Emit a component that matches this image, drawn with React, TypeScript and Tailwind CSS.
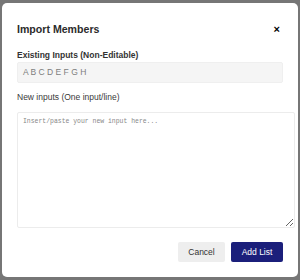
import React from "react";

export default function App() {
  return (
    <div className="w-[300px] h-[280px] bg-[#767676] pt-[3px] pl-[2px] font-['Liberation_Sans',Arial,sans-serif] overflow-hidden">
      <div className="w-[296px] h-[274px] bg-white rounded-[5px] pt-[18px] px-[15px] pb-[15px] flex flex-col">
        <div className="flex items-center justify-between h-[16px]">
          <h2 className="text-[10.6px] leading-[16px] font-bold text-[#2b2b2b]">Import Members</h2>
          <span className="text-[11px] leading-[16px] font-bold text-black mr-[3px]">×</span>
        </div>
        <div className="mt-[12px] text-[8.5px] leading-[12px] font-bold text-[#333]">
          Existing Inputs (Non-Editable)
        </div>
        <div className="mt-[1px] h-[21px] bg-[#f5f5f5] border border-[#efefef] rounded-[2px] pl-[5px] flex items-center text-[8.5px] text-[#7d7d7d]">
          A B C D E F G H
        </div>
        <div className="mt-[8px] text-[8.5px] leading-[12px] text-[#3a3a3a]">
          New inputs (One input/line)
        </div>
        <textarea
          className="mt-[9px] w-[278px] h-[116px] shrink-0 border border-[#ececec] rounded-[2px] pl-[5px] pt-[5px] font-['Liberation_Mono',monospace] text-[6.45px] leading-[8px] text-[#333] placeholder:text-[#888] outline-none"
          placeholder="Insert/paste your new input here..."
        />
        <div className="mt-[14px] flex justify-end gap-[6px]">
          <button className="w-[47px] h-[20px] bg-[#eeeeee] rounded-[2px] text-[8.5px] text-[#333]">
            Cancel
          </button>
          <button className="w-[52px] h-[20px] bg-[#1b1f7b] rounded-[2px] text-[8.5px] text-white">
            Add List
          </button>
        </div>
      </div>
    </div>
  );
}
